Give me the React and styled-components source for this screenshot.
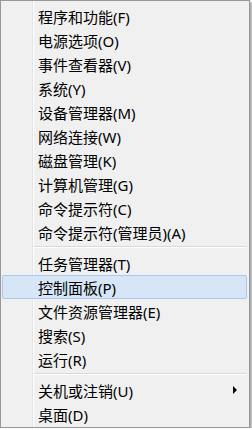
import React from 'react';
import styled, { createGlobalStyle } from 'styled-components';

const GlobalStyle = createGlobalStyle`
  html, body {
    margin: 0;
    padding: 0;
    background: #ffffff;
  }
  body {
    font-family: "Noto Sans", "Noto Sans CJK SC", sans-serif;
  }
`;

const Menu = styled.div`
  box-sizing: border-box;
  width: 250px;
  height: 428px;
  padding: 3px 0 1px;
  border: 1px solid #979797;
  background-color: #f0f0f0;
  background-image: linear-gradient(
    to right,
    transparent 31px,
    #e2e3e3 31px,
    #e2e3e3 32px,
    #ffffff 32px,
    #ffffff 33px,
    transparent 33px
  );
  box-shadow: 2px 2px 2px rgba(0, 0, 0, 0.35);
  display: flex;
  flex-direction: column;
`;

const Item = styled.div`
  box-sizing: border-box;
  height: 24px;
  margin: 0 2px 0 1px;
  padding-left: 35px;
  display: flex;
  align-items: center;
  justify-content: space-between;
  border: 1px solid ${(p) => (p.$active ? '#a9c8ec' : 'transparent')};
  border-radius: 2px;
  background: ${(p) => (p.$active ? '#d6e6f7' : 'transparent')};
  font-size: 15px;
  color: #000000;
  white-space: nowrap;
  cursor: default;
`;

const Arrow = styled.span`
  width: 0;
  height: 0;
  margin-right: 9px;
  border-top: 4px solid transparent;
  border-bottom: 4px solid transparent;
  border-left: 4px solid #000000;
`;

const Separator = styled.div`
  height: 7px;
  margin: 0 3px 0 33px;
  padding-top: 2px;
  box-sizing: border-box;

  &::before {
    content: '';
    display: block;
    border-top: 1px solid #d9d9d9;
    border-bottom: 1px solid #ffffff;
  }
`;

const groups = [
  [
    { label: '程序和功能(F)' },
    { label: '电源选项(O)' },
    { label: '事件查看器(V)' },
    { label: '系统(Y)' },
    { label: '设备管理器(M)' },
    { label: '网络连接(W)' },
    { label: '磁盘管理(K)' },
    { label: '计算机管理(G)' },
    { label: '命令提示符(C)' },
    { label: '命令提示符(管理员)(A)' },
  ],
  [
    { label: '任务管理器(T)' },
    { label: '控制面板(P)', active: true },
    { label: '文件资源管理器(E)' },
    { label: '搜索(S)' },
    { label: '运行(R)' },
  ],
  [
    { label: '关机或注销(U)', submenu: true },
    { label: '桌面(D)' },
  ],
];

export default function App() {
  return (
    <>
      <GlobalStyle />
      <Menu>
        {groups.map((group, gi) => (
          <React.Fragment key={gi}>
            {gi > 0 && <Separator />}
            {group.map((item) => (
              <Item key={item.label} $active={item.active}>
                <span>{item.label}</span>
                {item.submenu && <Arrow />}
              </Item>
            ))}
          </React.Fragment>
        ))}
      </Menu>
    </>
  );
}
